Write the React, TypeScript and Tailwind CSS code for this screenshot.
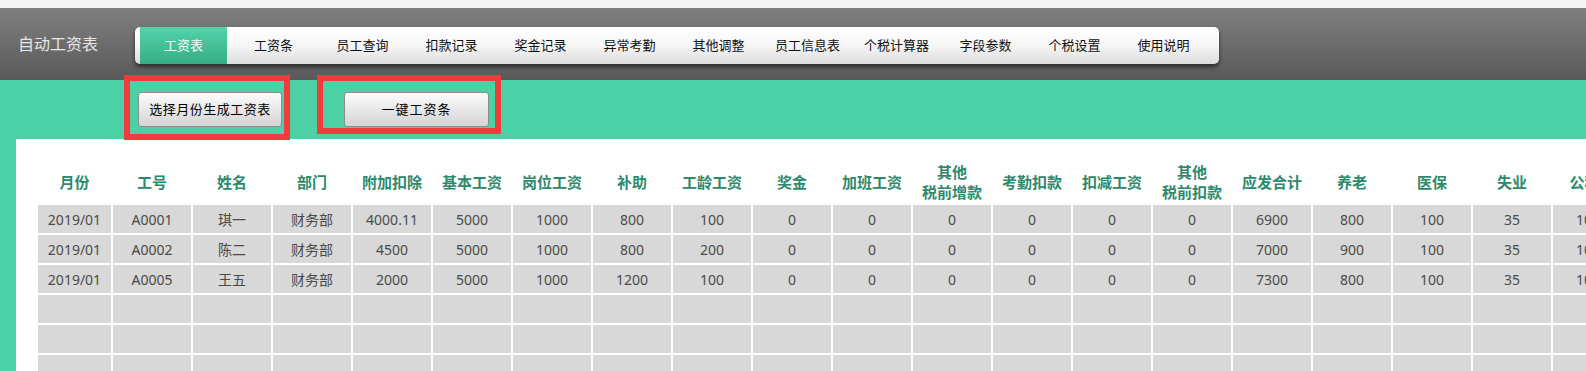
import React from 'react';

const tabs = ['工资表', '工资条', '员工查询', '扣款记录', '奖金记录', '异常考勤', '其他调整', '员工信息表', '个税计算器', '字段参数', '个税设置', '使用说明'];

const columns: string[][] = [
  ['月份'], ['工号'], ['姓名'], ['部门'], ['附加扣除'], ['基本工资'], ['岗位工资'], ['补助'], ['工龄工资'], ['奖金'],
  ['加班工资'], ['其他', '税前增款'], ['考勤扣款'], ['扣减工资'], ['其他', '税前扣款'], ['应发合计'], ['养老'], ['医保'], ['失业'], ['公积金'],
];

const rows: string[][] = [
  ['2019/01', 'A0001', '琪一', '财务部', '4000.11', '5000', '1000', '800', '100', '0', '0', '0', '0', '0', '0', '6900', '800', '100', '35', '1000'],
  ['2019/01', 'A0002', '陈二', '财务部', '4500', '5000', '1000', '800', '200', '0', '0', '0', '0', '0', '0', '7000', '900', '100', '35', '1000'],
  ['2019/01', 'A0005', '王五', '财务部', '2000', '5000', '1000', '1200', '100', '0', '0', '0', '0', '0', '0', '7300', '800', '100', '35', '1000'],
  Array(20).fill(''),
  Array(20).fill(''),
  Array(20).fill(''),
  Array(20).fill(''),
];

const font = { fontFamily: '"Noto Sans", "Noto Sans CJK SC", sans-serif' };

const App = () => {
  return (
    <div className="relative h-[371px] w-full overflow-hidden bg-[#f4f4f4] pt-[8px]" style={font}>
      {/* top bar */}
      <div className="flex h-[72px] items-start bg-gradient-to-b from-[#7f7f7f] to-[#5a5a5a]">
        <div className="ml-[18px] mt-[25px] text-[16px] leading-[22px] text-[#e6e6e6]">自动工资表</div>
        <nav className="ml-[37px] mt-[19px] flex h-[37px] w-[1084px] rounded-[5px] bg-gradient-to-b from-white via-[#f6f6f6] to-[#dcdcdc] pl-[5px] shadow-[0_3px_4px_rgba(0,0,0,0.55)]">
          {tabs.map((t, i) => (
            <div
              key={t}
              className={
                i === 0
                  ? 'flex w-[87px] mr-[2px] items-center justify-center bg-gradient-to-b from-[#52d4aa] to-[#37ad86] text-[13px] text-white'
                  : 'flex w-[89px] items-center justify-center text-[13px] text-[#111]'
              }
            >
              {t}
            </div>
          ))}
        </nav>
      </div>

      {/* green work area */}
      <div className="h-full bg-[#4cd1a6] pt-[12px]">
        <div className="flex h-[35px]">
          <button className="ml-[138px] w-[144px] rounded-[3px] border border-[#8c8c8c] bg-gradient-to-b from-[#fcfcfc] to-[#d4d4d4] text-[13px] tracking-[0.5px] text-black">
            选择月份生成工资表
          </button>
          <button className="ml-[62px] w-[145px] rounded-[3px] border border-[#8c8c8c] bg-gradient-to-b from-[#fcfcfc] to-[#d4d4d4] text-[13px] tracking-[1px] text-black">
            一键工资条
          </button>
        </div>

        <div className="ml-[16px] mt-[12px] h-full overflow-hidden bg-white pl-[22px] pt-[22px]">
          <div className="grid w-max grid-cols-[73px_repeat(19,78px)] gap-[2px]">
            {columns.map((c, i) => (
              <div
                key={'h' + i}
                className="flex h-[42px] flex-col items-center justify-center whitespace-nowrap text-[15px] font-bold leading-[20px] text-[#2b8a6b]"
              >
                {c.map((l) => (
                  <span key={l}>{l}</span>
                ))}
              </div>
            ))}
            {rows.map((r, ri) =>
              r.map((v, ci) => (
                <div
                  key={ri + '-' + ci}
                  className="flex h-[28px] items-center justify-center whitespace-nowrap bg-[#d8d8d8] text-[14px] text-[#4a4a4a]"
                >
                  {v}
                </div>
              )),
            )}
          </div>
        </div>
      </div>

      {/* annotation boxes */}
      <div className="absolute left-[124px] top-[75px] h-[65px] w-[166px] border-[6px] border-[#f23b3b]" />
      <div className="absolute left-[317px] top-[75px] h-[59px] w-[184px] border-[6px] border-[#f23b3b]" />
    </div>
  );
};

export default App;
